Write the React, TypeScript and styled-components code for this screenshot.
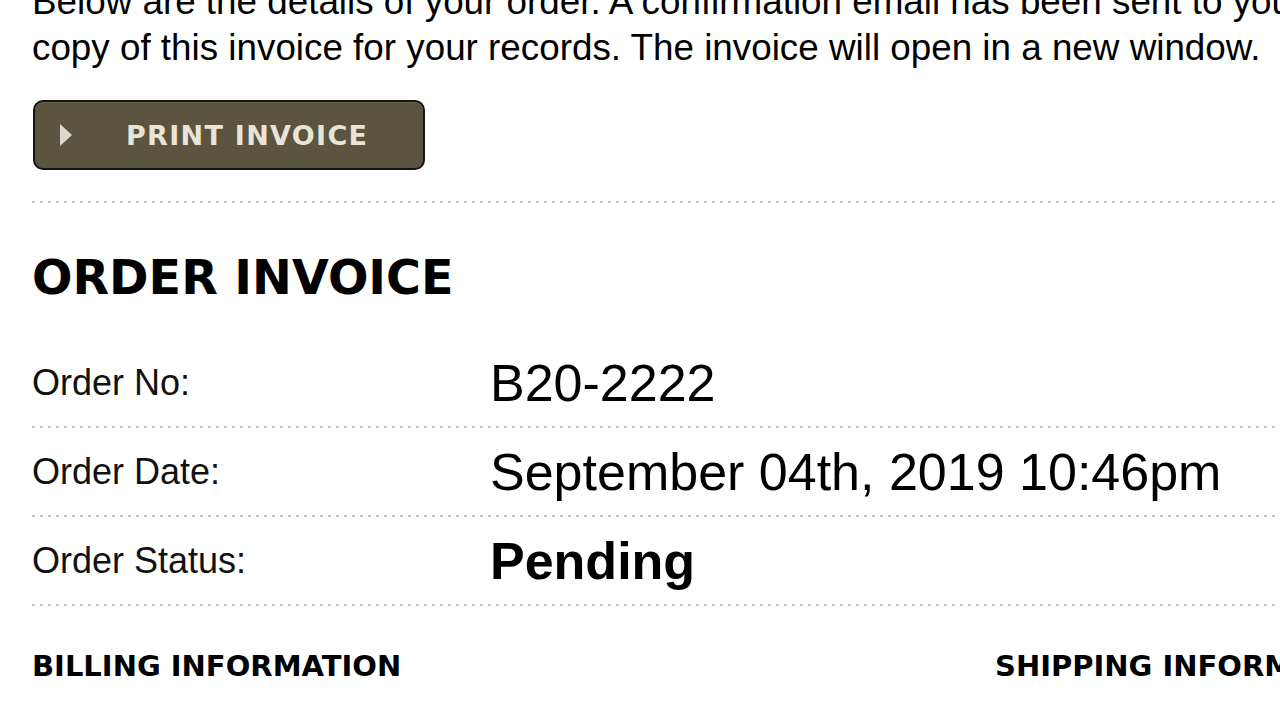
import React from 'react';
import styled, {createGlobalStyle} from "styled-components";

const GlobalStyle = createGlobalStyle`
    html, body {
        margin: 0;
        padding: 0;
        background: #ffffff;
        overflow: hidden;
    }

    body {
        font-family: "Liberation Sans", Arial, Helvetica, sans-serif;
        color: #000;
    }
`

type Row = {
    label: string
    value: string
    strong?: boolean
}

const rows: Row[] = [
    {label: "Order No:", value: "B20-2222"},
    {label: "Order Date:", value: "September 04th, 2019 10:46pm"},
    {label: "Order Status:", value: "Pending", strong: true},
]

export default function App() {
    return (
        <>
            <GlobalStyle/>
            <Page>
                <Intro>
                    Below are the details of your order. A confirmation email has been sent to your email address. Please keep a<br/>
                    copy of this invoice for your records. The invoice will open in a new window.
                </Intro>

                <PrintButton type="button">
                    <svg width="12" height="22" viewBox="0 0 12 22" aria-hidden="true">
                        <polygon points="0,0 12,11 0,22" fill="#dcd8ca"/>
                    </svg>
                    <span>PRINT INVOICE</span>
                </PrintButton>

                <Divider/>

                <Title>ORDER INVOICE</Title>

                <Details>
                    {rows.map(row => (
                        <React.Fragment key={row.label}>
                            <DetailRow>
                                <Label>{row.label}</Label>
                                <Value $strong={row.strong}>{row.value}</Value>
                            </DetailRow>
                            <Divider/>
                        </React.Fragment>
                    ))}
                </Details>

                <InfoColumns>
                    <SectionTitle>BILLING INFORMATION</SectionTitle>
                    <SectionTitle>SHIPPING INFORMATION</SectionTitle>
                </InfoColumns>
            </Page>
        </>
    );
}

const Page = styled.main`
    width: 1926px;
    margin-top: -21px;
    padding-left: 32px;
`

const Intro = styled.p`
    margin: 0;
    font-size: 36.8px;
    line-height: 46px;
    white-space: nowrap;
`

const PrintButton = styled.button`
    display: flex;
    align-items: center;
    gap: 54px;
    box-sizing: border-box;
    width: 392px;
    height: 70px;
    margin: 29px 0 31px 1px;
    padding: 0 0 0 25px;
    background: #5a5441;
    border: 2px solid #15140e;
    border-radius: 10px;
    box-shadow: inset 0 1px 0 rgba(255, 255, 255, 0.08);
    cursor: pointer;

    span {
        font-family: "DejaVu Sans", Verdana, sans-serif;
        font-weight: 700;
        font-size: 27px;
        letter-spacing: 1.3px;
        color: #e8e5d8;
        line-height: 1;
    }
`

const Divider = styled.div`
    height: 2px;
    background-image: repeating-linear-gradient(90deg, #c4c4c4 0 3px, transparent 3px 8px);
`

const Title = styled.h1`
    margin: 47px 0 34px;
    font-family: "DejaVu Sans", Verdana, sans-serif;
    font-weight: 700;
    font-size: 47.6px;
    line-height: normal;
`

const Details = styled.section`
    display: flex;
    flex-direction: column;
`

const DetailRow = styled.div`
    display: flex;
    align-items: center;
    padding: 14px 0 13px;
`

const Label = styled.span`
    width: 458px;
    flex-shrink: 0;
    font-size: 36px;
    color: #111;
`

const Value = styled.span<{ $strong?: boolean }>`
    font-size: 52px;
    line-height: 60px;
    font-weight: ${({$strong}) => $strong ? 700 : 400};
`

const InfoColumns = styled.section`
    display: grid;
    grid-template-columns: 963px 963px;
    margin-top: 43px;
`

const SectionTitle = styled.h2`
    margin: 0;
    font-family: "DejaVu Sans", Verdana, sans-serif;
    font-weight: 700;
    font-size: 29px;
    line-height: normal;
`
